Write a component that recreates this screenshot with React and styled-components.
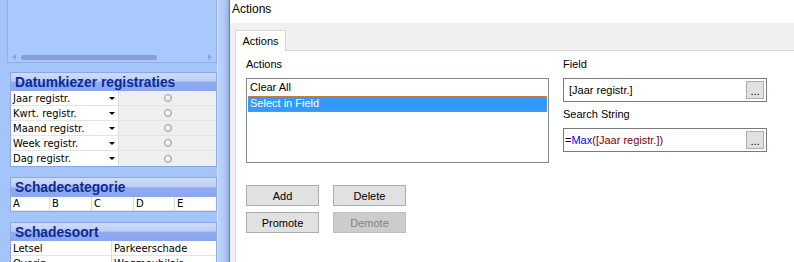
import React from "react";
import styled, { createGlobalStyle } from "styled-components";

const Global = createGlobalStyle`
  html, body { margin: 0; padding: 0; overflow: hidden; background: #ffffff; }
  body { font-family: "Liberation Sans", Arial, sans-serif; }
  * { box-sizing: border-box; }
`;

const Page = styled.div`
  display: flex;
  width: 794px;
  height: 262px;
  overflow: hidden;
`;

/* ---------- Sidebar ---------- */
const Sidebar = styled.div`
  display: flex;
  width: 230px;
  height: 100%;
  flex: none;
  background: #a5c4fa;
`;

const SideContent = styled.div`
  width: 217px;
  padding-left: 7px;
  display: flex;
  flex-direction: column;
  overflow: hidden;
`;

const SideEdge = styled.div`
  width: 13px;
  border-left: 1px solid #d6e4fb;
  border-right: 1px solid #4f84d6;
  background: linear-gradient(to right, #bcd2f8 0%, #b2cbf5 55%, #8fb0e6 100%);
`;

const TopPane = styled.div`
  flex: none;
  width: 210px;
  height: 63px;
  border: 1px solid #8eaff2;
  border-top: none;
  background: #a9c8fc;
  display: flex;
  align-items: flex-end;
  padding: 0 4px 2px 4px;
`;

const HScroll = styled.div`
  display: flex;
  align-items: center;
  height: 6px;
  width: 100%;
`;

const Arrow = styled.span`
  width: 0;
  height: 0;
  border-top: 3px solid transparent;
  border-bottom: 3px solid transparent;
  ${(p) =>
    p.$dir === "left"
      ? "border-right: 4px solid #8ea3dc;"
      : "border-left: 4px solid #8ea3dc; margin-left: auto;"}
`;

const Thumb = styled.span`
  margin-left: 5px;
  width: 136px;
  height: 5px;
  border-radius: 3px;
  background: #8b9bd7;
`;

const Box = styled.div`
  margin-top: ${(p) => p.$mt}px;
  margin-left: 3px;
  width: 207px;
  border: 1px solid #89a6ee;
  background: #ffffff;
  flex: none;
`;

const BoxHeader = styled.div`
  height: ${(p) => p.$h}px;
  padding-left: 4px;
  display: flex;
  align-items: center;
  font-family: "Liberation Sans", Arial, sans-serif;
  font-weight: bold;
  font-size: 13.8px;
  color: #0b2a98;
  background: linear-gradient(
    to bottom,
    #d0dcf8 0%,
    #bccdf5 45%,
    #91abef 52%,
    #8aa6ee 100%
  );
  white-space: nowrap;
`;

const PickRow = styled.div`
  display: grid;
  grid-template-columns: 107px 1fr;
  height: 15px;
  border-bottom: ${(p) => (p.$last ? "none" : "1px solid #e4e4e4")};
`;

const PickLabel = styled.div`
  display: flex;
  align-items: center;
  padding: 0 3px 0 2px;
  font-family: "DejaVu Sans", Verdana, sans-serif;
  font-size: 10px;
  color: #000;
  background: #ffffff;
  white-space: nowrap;
`;

const DropArrow = styled.span`
  margin-left: auto;
  width: 0;
  height: 0;
  border-left: 3px solid transparent;
  border-right: 3px solid transparent;
  border-top: 3px solid #000;
`;

const PickValue = styled.div`
  display: flex;
  align-items: center;
  justify-content: center;
  background: #efefef;
  border-left: 1px solid #dedede;
`;

const Radio = styled.span`
  width: 8px;
  height: 8px;
  border-radius: 50%;
  border: 1px solid #9b9b9b;
  background: radial-gradient(circle at 40% 40%, #ffffff 0%, #e6e6e6 60%, #c9c9c9 100%);
`;

const CatRow = styled.div`
  display: grid;
  grid-template-columns: ${(p) => p.$cols};
  height: ${(p) => p.$h}px;
`;

const Cell = styled.div`
  display: flex;
  align-items: center;
  padding-left: 2px;
  font-family: "DejaVu Sans", Verdana, sans-serif;
  font-size: 10px;
  color: #000;
  border-right: ${(p) => (p.$last ? "none" : "1px solid #d8d8d8")};
  border-bottom: 1px solid #e4e4e4;
  white-space: nowrap;
  overflow: hidden;
`;

/* ---------- Main ---------- */
const Main = styled.div`
  flex: 1;
  display: flex;
  flex-direction: column;
  background: #f0f0f0;
  min-width: 0;
`;

const TitleBar = styled.div`
  height: 23px;
  background: #ffffff;
  padding: 2px 0 0 2px;
  font-size: 12px;
  color: #000;
`;

const TabStrip = styled.div`
  display: flex;
  padding: 7px 0 0 5px;
`;

const Tab = styled.div`
  width: 51px;
  height: 21px;
  border: 1px solid #d9d9d9;
  border-bottom: none;
  background: #ffffff;
  font-size: 11px;
  text-align: center;
  padding-top: 4px;
  margin-bottom: -1px;
  position: relative;
  z-index: 1;
`;

const TabPanel = styled.div`
  flex: 1;
  margin-left: 5px;
  background: #ffffff;
  border-top: 1px solid #d9d9d9;
  border-left: 1px solid #d9d9d9;
  padding: 6px 0 0 10px;
`;

const TopRow = styled.div`
  display: flex;
  gap: 14px;
`;

const Column = styled.div`
  width: ${(p) => p.$w}px;
  display: flex;
  flex-direction: column;
`;

const Label = styled.div`
  height: 15px;
  line-height: 15px;
  font-size: 11px;
  color: #000;
  margin-top: ${(p) => p.$mt || 0}px;
  margin-bottom: 6px;
`;

const ListBox = styled.div`
  height: 85px;
  border: 1px solid #828790;
  padding: 1px;
  background: #fff;
`;

const ListItem = styled.div`
  height: 16px;
  line-height: 15px;
  padding-left: 2px;
  font-size: 11px;
  color: ${(p) => (p.$selected ? "#ffffff" : "#000000")};
  background: ${(p) => (p.$selected ? "#3399ff" : "transparent")};
  outline: ${(p) => (p.$selected ? "1px dotted #c9843a" : "none")};
  outline-offset: -1px;
`;

const TextBox = styled.div`
  height: 24px;
  border: 1px solid #7a7a7a;
  display: flex;
  align-items: center;
  padding-left: ${(p) => p.$pl}px;
  padding-right: 2px;
  font-size: 11px;
  background: #fff;
  white-space: nowrap;
`;

const Ellipsis = styled.div`
  margin-left: auto;
  width: 18px;
  height: 18px;
  border: 1px solid #adadad;
  background: #e1e1e1;
  font-size: 11px;
  text-align: center;
  line-height: 16px;
  padding-top: 1px;
`;

const Tok = styled.span`
  color: ${(p) => p.$c};
`;

const ButtonGrid = styled.div`
  margin-top: 22px;
  display: grid;
  grid-template-columns: 73px 73px;
  column-gap: 14px;
  row-gap: 6px;
`;

const Button = styled.div`
  height: 21px;
  border: 1px solid ${(p) => (p.$disabled ? "#bfbfbf" : "#adadad")};
  background: ${(p) => (p.$disabled ? "#cccccc" : "#e1e1e1")};
  color: ${(p) => (p.$disabled ? "#838383" : "#000000")};
  font-size: 11px;
  display: flex;
  align-items: center;
  justify-content: center;
`;

const picks = ["Jaar registr.", "Kwrt. registr.", "Maand registr.", "Week registr.", "Dag registr."];
const cats = ["A", "B", "C", "D", "E"];

export default function App() {
  return (
    <Page>
      <Global />
      <Sidebar>
        <SideContent>
          <TopPane>
            <HScroll>
              <Arrow $dir="left" />
              <Thumb />
              <Arrow $dir="right" />
            </HScroll>
          </TopPane>

          <Box $mt={9}>
            <BoxHeader $h={18}>Datumkiezer registraties</BoxHeader>
            {picks.map((p, i) => (
              <PickRow key={p} $last={i === picks.length - 1}>
                <PickLabel>
                  {p}
                  <DropArrow />
                </PickLabel>
                <PickValue>
                  <Radio />
                </PickValue>
              </PickRow>
            ))}
          </Box>

          <Box $mt={10}>
            <BoxHeader $h={19}>Schadecategorie</BoxHeader>
            <CatRow $cols="39px 42px 42px 41px 1fr" $h={14}>
              {cats.map((c, i) => (
                <Cell key={c} $last={i === cats.length - 1}>
                  {c}
                </Cell>
              ))}
            </CatRow>
          </Box>

          <Box $mt={10}>
            <BoxHeader $h={18}>Schadesoort</BoxHeader>
            <CatRow $cols="101px 1fr" $h={15}>
              <Cell>Letsel</Cell>
              <Cell $last>Parkeerschade</Cell>
            </CatRow>
            <CatRow $cols="101px 1fr" $h={15}>
              <Cell>Overig</Cell>
              <Cell $last>Wegmeubilair</Cell>
            </CatRow>
          </Box>
        </SideContent>
        <SideEdge />
      </Sidebar>

      <Main>
        <TitleBar>Actions</TitleBar>
        <TabStrip>
          <Tab>Actions</Tab>
        </TabStrip>
        <TabPanel>
          <TopRow>
            <Column $w={303}>
              <Label>Actions</Label>
              <ListBox>
                <ListItem>Clear All</ListItem>
                <ListItem $selected>Select in Field</ListItem>
              </ListBox>
            </Column>
            <Column $w={204}>
              <Label>Field</Label>
              <TextBox $pl={5}>
                [Jaar registr.]
                <Ellipsis>...</Ellipsis>
              </TextBox>
              <Label $mt={5}>Search String</Label>
              <TextBox $pl={1}>
                <Tok $c="#000000">=</Tok>
                <Tok $c="#0000ff">Max</Tok>
                <Tok $c="#800000">([Jaar registr.])</Tok>
                <Ellipsis>...</Ellipsis>
              </TextBox>
            </Column>
          </TopRow>
          <ButtonGrid>
            <Button>Add</Button>
            <Button>Delete</Button>
            <Button>Promote</Button>
            <Button $disabled>Demote</Button>
          </ButtonGrid>
        </TabPanel>
      </Main>
    </Page>
  );
}
